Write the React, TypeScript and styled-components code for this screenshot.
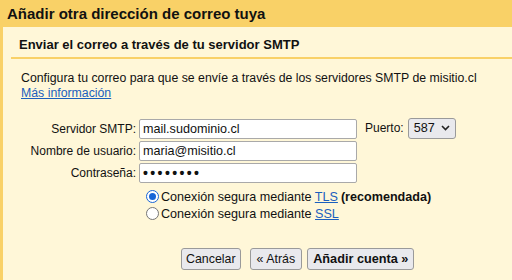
import React from 'react';
import styled, {createGlobalStyle} from 'styled-components';

const GlobalStyle = createGlobalStyle`
  html, body {
    margin: 0;
    padding: 0;
    background: #f9d167;
  }
  body {
    font-family: "Liberation Sans", Arial, sans-serif;
    color: #111;
  }
`;

const Page = styled.div`
  width: 512px;
  height: 280px;
  overflow: hidden;
  background: #f9d167;
  display: flex;
  flex-direction: column;
`;

const TitleBar = styled.div`
  height: 27px;
  flex: none;
  display: flex;
  align-items: center;
  padding-left: 7px;
  font-size: 15px;
  font-weight: bold;
  color: #111;
`;

const Panel = styled.div`
  flex: 1;
  margin-left: 3px;
  background: #fff7d8;
  display: flex;
  flex-direction: column;
`;

const Subtitle = styled.div`
  height: 30px;
  display: flex;
  align-items: center;
  padding-left: 16px;
  padding-top: 4px;
  box-sizing: border-box;
  font-size: 13px;
  font-weight: bold;
`;

const Divider = styled.div`
  height: 2px;
  margin-left: 8px;
  background: #f9d167;
`;

const Intro = styled.p`
  margin: 12px 0 0 18px;
  font-size: 12.3px;
  line-height: 15px;
`;

const Link = styled.a`
  color: #1b5fbe;
  text-decoration: underline;
  cursor: pointer;
`;

const FormGrid = styled.div`
  margin-top: 18px;
  display: grid;
  grid-template-columns: 133px 218px auto;
  grid-auto-rows: 20px;
  column-gap: 3px;
  row-gap: 2px;
  align-items: center;
  font-size: 12px;
`;

const Label = styled.label`
  text-align: right;
`;

const TextInput = styled.div<{ $secret?: boolean }>`
  height: 20px;
  box-sizing: border-box;
  border: 1px solid #a9a9a9;
  border-radius: 2px;
  background: #fff;
  padding-left: 3px;
  display: flex;
  align-items: center;
  font-size: ${p => (p.$secret ? '14px' : '12.6px')};
  letter-spacing: ${p => (p.$secret ? '2.4px' : '0')};
  font-weight: ${p => (p.$secret ? 'bold' : 'normal')};
`;

const PortCell = styled.div`
  display: flex;
  align-items: center;
  gap: 4px;
  padding-left: 5px;
  margin-top: -2px;
`;

const Select = styled.div`
  width: 48px;
  height: 21px;
  box-sizing: border-box;
  border: 1px solid #9a9a9a;
  border-radius: 3px;
  background: #e9e9ed;
  display: flex;
  align-items: center;
  justify-content: space-between;
  padding: 0 5px 0 5px;
  font-size: 12.6px;
`;

const RadioGroup = styled.div`
  margin: 7px 0 0 143px;
  display: flex;
  flex-direction: column;
  gap: 4px;
  font-size: 12.6px;
`;

const RadioRow = styled.label`
  display: flex;
  align-items: center;
  gap: 2px;
  height: 13px;
`;

const RadioDot = styled.span<{ $checked?: boolean }>`
  width: 13px;
  height: 13px;
  box-sizing: border-box;
  border-radius: 50%;
  border: ${p => (p.$checked ? '1.5px solid #1765d6' : '1px solid #767676')};
  background: #fff;
  display: flex;
  align-items: center;
  justify-content: center;

  &::after {
    content: '';
    width: 7px;
    height: 7px;
    border-radius: 50%;
    background: ${p => (p.$checked ? '#1765d6' : 'transparent')};
  }
`;

const Strong = styled.b`
  margin-left: 3px;
`;

const ButtonRow = styled.div`
  margin: 28px 0 0 178px;
  display: flex;
  align-items: center;
`;

const Button = styled.button<{ $primary?: boolean; $gap?: number; $pad?: number }>`
  height: 22px;
  margin-left: ${p => p.$gap ?? 0}px;
  padding: 0 ${p => p.$pad ?? 4}px;
  box-sizing: border-box;
  border: 1px solid #9a9a9a;
  border-radius: 3px;
  background: #e9e9ed;
  font-family: "Liberation Sans", Arial, sans-serif;
  font-size: ${p => (p.$primary ? '12.7px' : '12.4px')};
  font-weight: ${p => (p.$primary ? 'bold' : 'normal')};
  color: #111;
  cursor: pointer;
`;

const Chevron = () => (
  <svg width="9" height="6" viewBox="0 0 9 6">
    <path d="M1 1 L4.5 4.5 L8 1" fill="none" stroke="#222" strokeWidth="1.6"/>
  </svg>
);

export default function App() {
  return (
    <Page>
      <GlobalStyle/>
      <TitleBar>Añadir otra dirección de correo tuya</TitleBar>
      <Panel>
        <Subtitle>Enviar el correo a través de tu servidor SMTP</Subtitle>
        <Divider/>
        <Intro>
          Configura tu correo para que se envíe a través de los servidores SMTP de misitio.cl
          <br/>
          <Link>Más información</Link>
        </Intro>
        <FormGrid>
          <Label>Servidor SMTP:</Label>
          <TextInput>mail.sudominio.cl</TextInput>
          <PortCell>
            Puerto:
            <Select>587<Chevron/></Select>
          </PortCell>
          <Label>Nombre de usuario:</Label>
          <TextInput>maria@misitio.cl</TextInput>
          <span/>
          <Label>Contraseña:</Label>
          <TextInput $secret>••••••••</TextInput>
          <span/>
        </FormGrid>
        <RadioGroup>
          <RadioRow>
            <RadioDot $checked/>
            <span>Conexión segura mediante <Link>TLS</Link><Strong>(recomendada)</Strong></span>
          </RadioRow>
          <RadioRow>
            <RadioDot/>
            <span>Conexión segura mediante <Link>SSL</Link></span>
          </RadioRow>
        </RadioGroup>
        <ButtonRow>
          <Button>Cancelar</Button>
          <Button $gap={9} $pad={6}>« Atrás</Button>
          <Button $gap={5} $pad={5} $primary>Añadir cuenta »</Button>
        </ButtonRow>
      </Panel>
    </Page>
  );
}
